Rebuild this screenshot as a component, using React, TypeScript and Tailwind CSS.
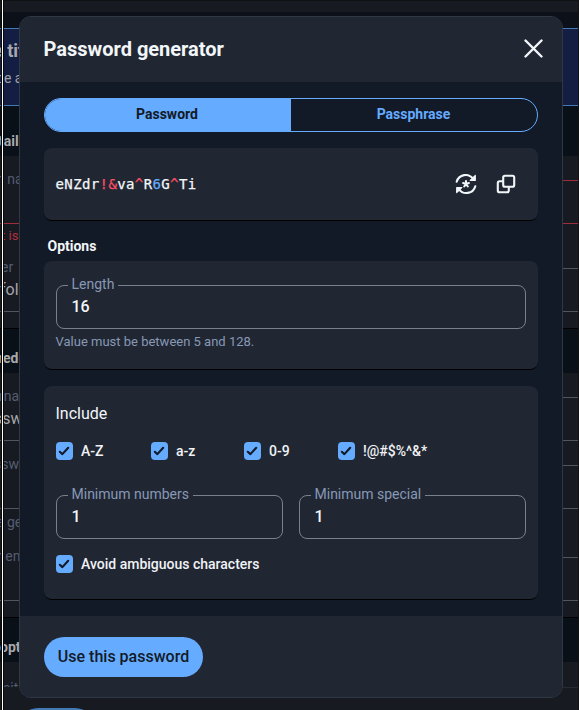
import React from "react";

type Tone = "red" | "grey" | "black" | "faint" | "blue" | "none";

const toneClass: Record<Tone, string> = {
  red: "border-[#a12d3c]",
  grey: "border-[#50565f]",
  black: "border-black",
  faint: "border-[#252b34]",
  blue: "border-[#4379b5]",
  none: "border-transparent",
};

function Strip({
  size,
  fill,
  line = "none",
  notch = false,
  children,
}: {
  size: string;
  fill: string;
  line?: Tone;
  notch?: boolean;
  children?: React.ReactNode;
}) {
  return (
    <div className={`flex shrink-0 ${size} ${fill}`}>
      <div className={`relative z-10 w-[60px] shrink-0 border-b whitespace-nowrap ${notch ? "border-transparent" : toneClass[line]}`}>
        {children}
      </div>
      <div className={`flex-1 border-b ${toneClass[line]}`} />
    </div>
  );
}

const PANEL = "bg-[#171a21]";
const DEEP = "bg-[#0a1018]";

function Backdrop() {
  return (
    <div className="isolate flex h-[710px] w-[579px] flex-col overflow-hidden bg-[#171a21]">
      <Strip size="h-px" fill="bg-[#101112]" />
      <Strip size="h-[11px]" fill={PANEL} />
      <Strip size="h-[17px]" fill="bg-[#0c1119]" line="blue" />
      <Strip size="h-[77px]" fill="bg-[#141e43]" line="blue">
        <div className="-ml-[7px] pt-[12px] text-[18px] leading-[20px] font-bold text-[#a9a9ac]">e tit</div>
        <div className="-ml-[4px] pt-[7px] text-[14px] leading-[20px] text-[#a0a1a6]">de a</div>
      </Strip>
      <Strip size="h-[50px]" fill={DEEP}>
        <div className="-ml-px pt-[25px] text-[14px] leading-[20px] font-bold text-[#a9a9ac]">tails</div>
      </Strip>
      <Strip size="h-[25px]" fill={PANEL} line="red" notch>
        <div className="-ml-[4px] pt-[13px] text-[14px] leading-[20px] text-[#555d72]">n na</div>
      </Strip>
      <Strip size="h-[43px]" fill={PANEL} line="red" />
      <Strip size="h-[45px]" fill={PANEL} line="grey" notch>
        <div className="pt-[3px] pl-[1px] text-[13px] leading-[17px] text-[#b03042]">t is r</div>
        <div className="pt-[13px] pl-[1px] text-[14px] leading-[20px] text-[#555d72]">er</div>
      </Strip>
      <Strip size="h-[43px]" fill={PANEL} line="grey">
        <div className="pt-[11px] text-[16px] leading-[20px] text-[#a5a6aa]">fold</div>
      </Strip>
      <Strip size="h-[17px]" fill={PANEL} line="black" />
      <Strip size="h-[44px]" fill={DEEP}>
        <div className="-ml-[2px] pt-[19px] text-[14px] leading-[20px] font-bold text-[#a9a9ac]">rede</div>
      </Strip>
      <Strip size="h-[25px]" fill={PANEL} line="grey" notch>
        <div className="-ml-[1px] pt-[13px] text-[14px] leading-[20px] text-[#555d72]">rna</div>
      </Strip>
      <Strip size="h-[43px]" fill={PANEL} line="grey">
        <div className="-ml-[6px] pt-[11px] text-[16px] leading-[20px] text-[#a5a6aa]">ssw</div>
      </Strip>
      <Strip size="h-[25px]" fill={PANEL} line="grey" notch>
        <div className="-ml-[6px] pt-[13px] text-[14px] leading-[20px] text-[#555d72]">sswo</div>
      </Strip>
      <Strip size="h-[43px]" fill={PANEL} line="grey" />
      <Strip size="h-[49px]" fill={PANEL} line="grey" notch>
        <div className="-ml-[4px] pt-[3px] text-[14px] leading-[20px] text-[#555d72]">e ge</div>
        <div className="-ml-[3px] pt-[14px] text-[14px] leading-[20px] text-[#555d72]">r en</div>
      </Strip>
      <Strip size="h-[43px]" fill={PANEL} line="grey" />
      <Strip size="h-[17px]" fill={PANEL} line="black" />
      <Strip size="h-[44px]" fill={DEEP}>
        <div className="pt-[19px] text-[14px] leading-[20px] font-bold text-[#a9a9ac]">opti</div>
      </Strip>
      <Strip size="h-[26px]" fill={PANEL} line="faint" notch>
        <div className="h-[25px] overflow-hidden pt-[18px] pl-[3px] text-[14px] leading-[16px] text-[#555d72]">sit</div>
      </Strip>
      <Strip size="h-[20px]" fill={PANEL} />
      <div className="ml-[18px] h-10 w-[77px] shrink-0 rounded-full bg-[#4379b5]" />
    </div>
  );
}

function Check({ label, className = "" }: { label: string; className?: string }) {
  return (
    <label className={`flex items-center gap-[8px] text-[14px] leading-[20px] font-medium text-[#f0f2f5] ${className}`}>
      <span className="flex h-[17.5px] w-[17.5px] shrink-0 items-center justify-center rounded-[4px] bg-[#65abff]">
        <svg width="12" height="12" viewBox="0 0 12 12" fill="none">
          <path d="M1.8 6.8 4.4 9.1 10.2 2.8" stroke="#121a27" strokeWidth="2.1" strokeLinecap="round" strokeLinejoin="round" />
        </svg>
      </span>
      {label}
    </label>
  );
}

function Field({ label, value }: { label: string; value: string }) {
  return (
    <div className="relative h-11 rounded-[8px] border border-[#79808e] px-[14.5px] pt-[10px] text-[16px] leading-[22px] font-medium text-[#f3f6f9]">
      <span className="absolute -top-[12px] left-[11px] bg-[#202733] pr-[4px] pl-[3.5px] text-[14px] leading-[20px] font-normal whitespace-nowrap text-[#8898b5]">
        {label}
      </span>
      {value}
    </div>
  );
}

function RegenerateIcon() {
  return (
    <svg width="22" height="22" viewBox="0 0 22 22" fill="none" stroke="#f3f6f9" strokeWidth="2.1" strokeLinecap="round" strokeLinejoin="round">
      <path d="M1.7 8.8A9.2 9.2 0 0 1 18.2 6" />
      <path d="M20.3 2.4V7.4H15.2Z" fill="#f3f6f9" strokeWidth="1.2" />
      <path d="M20.3 13.2A9.2 9.2 0 0 1 3.8 16" />
      <path d="M1.7 19.6V14.6H6.8Z" fill="#f3f6f9" strokeWidth="1.2" />
      <path d="M11 11V8M11 11l2.9-.9M11 11l1.8 2.5M11 11l-1.8 2.5M11 11l-2.9-.9" />
    </svg>
  );
}

function CopyIcon() {
  return (
    <svg width="20" height="20" viewBox="0 0 20 20" fill="none" stroke="#f3f6f9" strokeWidth="2.1" strokeLinejoin="round">
      <rect x="7.2" y="1.8" width="11" height="11" rx="1.8" />
      <path d="M7.2 7.2H3.6A1.8 1.8 0 0 0 1.8 9V16.4A1.8 1.8 0 0 0 3.6 18.2H11A1.8 1.8 0 0 0 12.8 16.4V12.8" />
    </svg>
  );
}

const CARD = "rounded-[8px] border-b border-black bg-[#202733]";
const password = "eNZdr!&va^R6G^Ti";

function charColor(c: string) {
  if (/[0-9]/.test(c)) return "text-[#65abff]";
  if (/[A-Za-z]/.test(c)) return "text-[#f3f6f9]";
  return "text-[#ff4e63]";
}

export default function App() {
  return (
    <div className="relative h-[710px] w-[579px] overflow-hidden bg-[#171a21] font-['Roboto',sans-serif]">
      <Backdrop />
      <div className="absolute inset-y-0 left-px w-[3px] border-x border-[#0a0a0a] bg-white" />
      <div className="absolute inset-y-0 right-0 w-px bg-[#101112]" />

      <div className="absolute top-[16px] left-[19px] flex h-[682px] w-[544px] flex-col overflow-hidden rounded-[12px] border border-[#2f3845] bg-[#121a27]">
        <header className="flex h-[65px] shrink-0 items-center justify-between bg-[#202733] pr-[19px] pb-[2px] pl-[23.5px]">
          <h1 className="text-[20px] leading-[28px] font-bold text-[#f3f6f9]">Password generator</h1>
          <svg width="19" height="19" viewBox="0 0 19 19" stroke="#f3f6f9" strokeWidth="2.4" strokeLinecap="round">
            <path d="M1.5 1.5l16 16M17.5 1.5l-16 16" />
          </svg>
        </header>

        <main className="flex flex-1 flex-col px-[24px] pt-[16px]">
          <div className="flex h-[34px] shrink-0 overflow-hidden rounded-full border border-[#65abff] text-center text-[14px] leading-[31px] font-bold">
            <div className="w-[246px] bg-[#65abff] pr-[2px] text-[#121a27]">Password</div>
            <div className="flex-1 pr-[1px] text-[#65abff]">Passphrase</div>
          </div>

          <div className={`mt-[16px] flex h-[73px] shrink-0 items-center pr-[22.5px] pl-[11.5px] ${CARD}`}>
            <div className="flex-1 font-['DejaVu_Sans_Mono',monospace] text-[14px] leading-[20px] tracking-[0.37px] [-webkit-text-stroke:0.25px_currentColor]">
              {password.split("").map((c, i) => (
                <span key={i} className={charColor(c)}>{c}</span>
              ))}
            </div>
            <RegenerateIcon />
            <div className="w-[19px]" />
            <CopyIcon />
          </div>

          <h2 className="mt-[15px] pl-[3.5px] text-[14px] leading-[20px] font-bold text-[#f3f6f9]">Options</h2>

          <div className={`mt-[5px] h-[109px] shrink-0 px-[12px] pt-[24px] ${CARD}`}>
            <Field label="Length" value="16" />
            <p className="mt-[4px] -ml-[0.5px] text-[13px] leading-[18px] text-[#8898b5]">Value must be between 5 and 128.</p>
          </div>

          <div className={`mt-[16px] h-[214px] shrink-0 px-[12px] pt-[17px] ${CARD}`}>
            <h3 className="-ml-[0.5px] text-[16px] leading-[22px] text-[#f3f6f9]">Include</h3>
            <div className="mt-[16px] -ml-[0.5px] flex">
              <Check label="A-Z" className="w-[95px]" />
              <Check label="a-z" className="w-[93px]" />
              <Check label="0-9" className="w-[94px]" />
              <Check label="!@#$%^&*" />
            </div>
            <div className="mt-[34px] grid grid-cols-2 gap-[16px]">
              <Field label="Minimum numbers" value="1" />
              <Field label="Minimum special" value="1" />
            </div>
            <Check label="Avoid ambiguous characters" className="mt-[15px] -ml-[0.5px]" />
          </div>
        </main>

        <footer className="flex h-[81px] shrink-0 items-center bg-[#202733] pl-[24px]">
          <button className="h-[40px] w-[159px] rounded-full bg-[#65abff] text-[16px] font-medium text-[#121a27]">Use this password</button>
        </footer>
      </div>
    </div>
  );
}
